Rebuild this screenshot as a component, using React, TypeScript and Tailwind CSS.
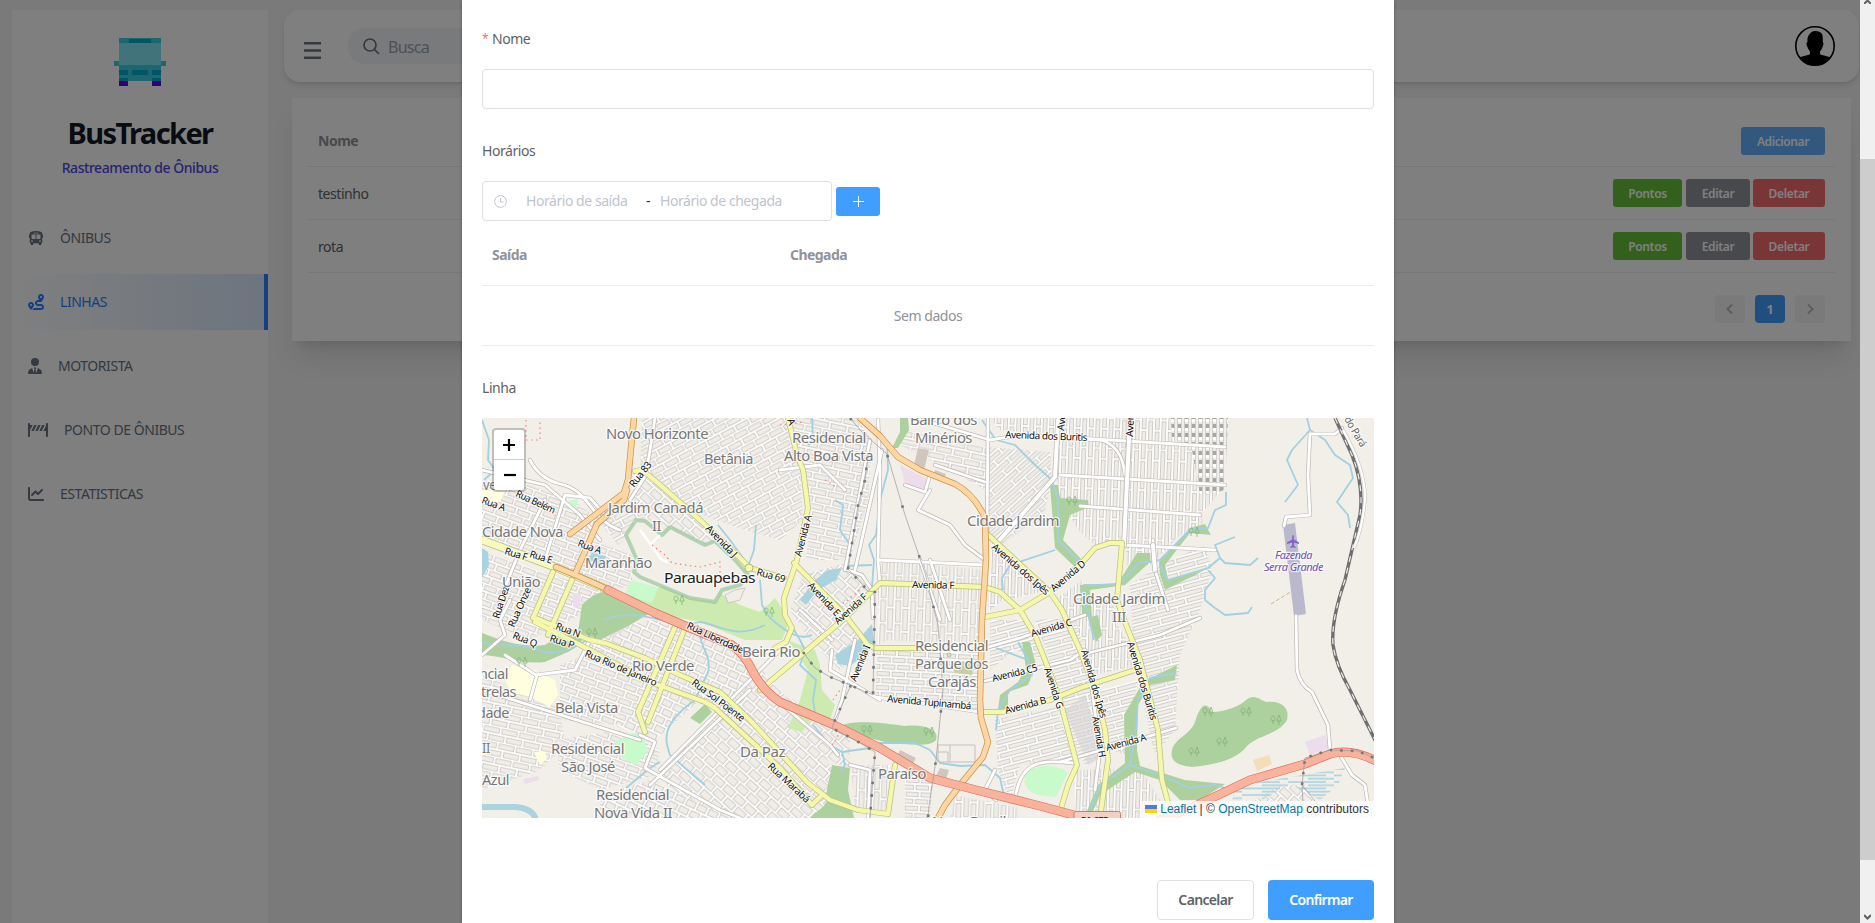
import React from "react";
import { FaBus, FaRoute, FaUserTie, FaRoadBarrier, FaChartLine } from "react-icons/fa6";

type P = { d: string };

/* ---------- Map data ---------- */

const blocks = [
  { id: "g0", w: 15, h: 7, a: 3 },
  { id: "g1", w: 16, h: 7.5, a: -28 },
  { id: "g2", w: 15, h: 7.5, a: 20 },
  { id: "g3", w: 24, h: 7.5, a: 92 },
  { id: "g4", w: 34, h: 6.5, a: -42 },
  { id: "g5", w: 30, h: 6.8, a: -15 },
  { id: "g6", w: 12, h: 9, a: 25 },
  { id: "g7", w: 14, h: 9.5, a: 42 },
  { id: "g8", w: 30, h: 6.6, a: 92 },
  { id: "g9", w: 18, h: 7.5, a: 12 },
];

const districts: [string, string][] = [
  ["g1", "642,418 786,418 800,470 803,520 780,540 745,530 700,515 640,470"],
  ["g7", "640,476 660,486 735,556 690,540 665,530 640,515 628,500"],
  ["g9", "792,418 856,418 872,440 868,500 850,560 806,560 812,505 798,465"],
  ["g1", "598,520 625,505 640,505 650,530 630,535 618,545"],
  ["g2", "482,482 530,485 580,505 598,520 590,548 578,572 482,540"],
  ["g2", "482,552 605,592 590,610 530,640 482,620"],
  ["g2", "590,540 632,555 632,585 615,590 580,575"],
  ["g6", "598,630 655,620 735,650 755,680 740,712 700,700 655,740 600,720 572,670"],
  ["g2", "560,665 600,650 655,685 640,715 620,725 560,720"],
  ["g9", "482,675 560,708 565,745 540,770 482,790"],
  ["g2", "555,740 620,730 660,750 655,775 600,790 560,770"],
  ["g7", "655,775 760,668 815,730 840,790 850,818 710,818"],
  ["g6", "600,795 650,780 730,818 600,818"],
  ["g7", "765,690 790,698 850,740 850,770 830,760 800,730 775,712"],
  ["g7", "803,575 848,562 872,590 845,618 870,640 840,670 810,640 790,610"],
  ["g3", "880,590 983,592 983,612 925,620 878,645"],
  ["g3", "878,560 985,570 985,645 878,640"],
  ["g0", "876,650 983,650 982,715 876,695"],
  ["g9", "900,430 988,448 986,490 950,470 900,445"],
  ["g4", "988,447 1050,452 1052,480 1045,510 1000,548 988,530"],
  ["g8", "990,418 1225,418 1222,490 1200,515 1125,525 1055,480 1058,435 1000,430"],
  ["g8", "1058,480 1125,480 1122,540 1098,548 1080,532 1072,520 1058,500"],
  ["g8", "1126,515 1202,515 1203,528 1180,535 1150,565 1126,565"],
  ["g5", "1130,585 1160,565 1205,545 1212,570 1200,610 1180,655 1175,730 1155,755 1135,665"],
  ["g8", "992,540 1048,590 1000,602 988,612"],
  ["g5", "990,620 1030,620 1045,660 1015,650 990,670"],
  ["g8", "1055,600 1082,580 1090,600 1112,600 1118,625 1140,665 1095,675 1080,635"],
  ["g5", "1035,620 1075,618 1098,700 1060,705 1048,655"],
  ["g5", "995,720 1055,706 1075,760 1020,765 1010,800 998,770"],
  ["g5", "1055,705 1090,695 1105,755 1085,765"],
  ["g5", "1100,690 1138,680 1130,715 1125,755 1108,748"],
  ["g5", "1155,680 1175,680 1170,730 1160,735"],
  ["g8", "1075,770 1140,768 1160,800 1150,818 1075,818"],
  ["g3", "850,765 890,765 885,812 855,808"],
  ["g0", "905,765 933,780 930,818 905,818"],
  ["g3", "955,795 1020,808 1020,818 950,818"],
  ["g7", "1255,800 1280,785 1305,785 1325,818 1250,818"],
];

const waterAreas = [
  "M800,600 L815,580 L828,570 L842,568 L836,580 L818,590 L806,605 Z",
  "M835,655 L858,640 L872,624 L874,642 L864,655 L850,666 L838,664 Z",
  "M588,560 L592,552 L606,556 L602,566 Z",
  "M482,548 L488,552 L489,565 L482,578 Z",
];

const woods = [
  "M842,726 C848,720 880,722 905,726 C925,724 940,730 936,740 C930,748 905,744 885,742 C870,738 850,735 842,726 Z",
  "M1172,750 C1175,738 1190,735 1195,722 C1200,705 1206,700 1212,712 C1225,712 1240,706 1246,700 C1253,694 1258,698 1266,702 C1282,700 1290,708 1287,720 C1278,735 1258,735 1247,746 C1235,762 1210,765 1192,767 C1175,765 1170,760 1172,750 Z",
  "M482,633 C500,640 520,648 545,645 C560,635 570,630 582,640 C578,650 560,655 545,662 C520,665 500,655 482,655 Z",
  "M582,605 C600,585 620,590 640,600 L655,610 L630,625 L600,640 L578,632 Z",
  "M832,765 L850,768 L848,790 L854,818 L810,818 C820,808 830,805 826,795 Z",
  "M1050,485 L1058,485 L1060,498 L1088,500 L1089,507 L1070,515 L1063,540 L1082,560 L1076,568 L1055,548 Z",
  "M900,418 L908,418 L909,430 L898,448 L892,448 L900,432 Z",
  "M1159,562 L1190,528 L1205,524 L1211,535 L1190,533 L1165,565 L1168,580 L1205,570 L1165,590 L1160,575 Z",
  "M1137,553 L1150,553 L1150,562 L1125,585 L1090,590 L1092,618 L1082,615 L1080,585 L1118,583 Z",
  "M1022,642 L1030,642 L1036,665 L1028,685 L1008,692 L1008,712 L998,710 L1000,695 L1018,682 L1026,668 Z",
  "M1177,665 L1175,680 L1150,685 L1138,705 L1137,750 L1140,766 L1185,780 L1225,784 L1200,800 L1180,800 L1160,780 L1135,772 L1100,795 L1090,818 L1084,818 L1098,785 L1125,763 L1124,715 L1143,682 Z",
  "M690,718 L705,704 L712,712 L700,724 Z",
  "M1088,618 L1098,615 L1102,635 L1096,642 Z",
];

const parks = [
  ["#cdebb0", "M658,588 L690,575 L740,605 L760,612 L775,598 L790,620 L782,640 L745,640 L700,622 L660,614 L630,600 Z"],
  ["#cdebb0", "M788,640 L800,645 L815,650 L820,665 L822,690 L835,705 L830,720 L812,718 L802,732 L788,728 L800,700 L808,670 Z"],
  ["#c8facc", "M624,595 L632,580 L658,588 L652,603 Z"],
  ["#c8facc", "M615,743 Q630,730 642,734 L648,752 L635,765 L618,755 Z"],
  ["#c8facc", "M1025,775 C1035,762 1060,765 1068,773 L1056,797 L1038,795 Q1022,790 1025,775 Z"],
  ["#c8facc", "M568,502 L578,498 L576,510 L568,510 Z"],
  ["#ffffe0", "M505,678 L512,665 L530,668 L555,680 L558,695 L550,707 L530,697 L510,692 Z"],
  ["#ffffe0", "M534,752 L545,752 L547,758 L540,765 Z"],
  ["#ffffe0", "M482,490 L505,492 L500,502 L482,502 Z"],
  ["#ecdcec", "M900,465 L930,480 L924,493 L906,487 Z"],
  ["#ecdcec", "M1305,742 L1325,735 L1330,748 L1310,755 Z"],
  ["#ecdcec", "M602,625 L622,618 L626,628 L612,638 Z"],
  ["#ecdcec", "M573,593 L581,593 L580,608 L573,607 Z"],
  ["#ecdcec", "M523,779 L538,776 L539,780 L525,784 Z"],
  ["#d1c6bd", "M918,448 L929,450 L924,470 L914,465 Z"],
  ["#d1c6bd", "M935,470 L946,474 L943,480 L934,477 Z"],
  ["#d1c6bd", "M900,750 L916,758 L911,767 L895,760 Z"],
  ["#d1c6bd", "M940,768 L949,770 L946,779 L936,776 Z"],
  ["#f5dcba", "M1253,760 L1269,755 L1272,764 L1257,771 Z"],
  ["#bab9cc", "M1283,525 L1295,523 L1306,614 L1294,616 Z"],
  ["#c9cf9f", "M953,662 L973,662 L972,675 L955,673 Z"],
];

const rivers = [
  "M482,420 L489,440 L488,460 L495,470 L484,480",
  "M812,418 L813,440 L808,445",
  "M887,440 L888,470 L880,500 L876,535 L869,545 L874,560 L871,600",
  "M835,500 L843,505 L840,530 L850,545",
  "M844,566 L872,565",
  "M748,565 L730,540 L718,525 M756,525 L754,550 L745,575",
  "M760,580 L762,605 L770,618 C790,635 800,640 812,635",
  "M785,615 L800,640 L805,650 L800,665 L816,680 L813,700 L815,712",
  "M813,725 L830,745 L842,752 L845,765 L840,772 M842,752 L870,748 L880,743 L915,743 L930,750 L940,763 L960,766 L985,765 L1000,778 L1005,800",
  "M603,620 C640,605 670,630 700,622 C720,625 735,640 765,625",
  "M482,642 C500,650 520,640 545,652 C560,655 580,645 590,638",
  "M698,625 C700,650 712,655 708,672 L695,700 C660,725 665,740 670,755 L705,785",
  "M626,788 L650,768 L660,762",
  "M982,420 L996,440 L1015,445 L1035,465 L1052,480 L1058,500 L1058,540 L1080,562",
  "M1055,550 L1010,565 L1002,578 L1003,590",
  "M1083,585 L1118,585 L1140,562 L1150,562 L1160,560 L1190,530 L1208,528 L1215,510 L1226,505 L1226,492",
  "M1160,565 L1168,580 L1208,568 L1220,558 L1215,545 L1235,537 M1220,558 L1225,563 L1250,565 L1258,558",
  "M1208,570 L1215,578 L1205,590 L1205,600 L1215,608 L1225,615 L1248,613 L1252,607",
  "M1307,418 L1310,430 L1292,450 L1287,460 L1298,485 L1285,502",
  "M1310,430 L1325,440 L1335,455 L1350,465 L1353,478 L1337,502 L1348,515 L1350,528",
  "M1083,590 L1094,640 M996,648 L1028,660 L1018,642 M1028,660 L1032,675 L1010,690 L998,710 L996,730",
  "M1175,673 L1150,678 L1138,700 L1136,730 L1130,765 L1160,775 L1190,788 L1215,785 L1225,788 M1130,765 L1100,785 L1090,810",
];

const minorRoads = [
  "M655,418 L650,450 L646,475 L630,500",
  "M482,470 L545,485 L580,515 L600,540",
  "M545,560 L565,495 L590,498 L605,515",
  "M530,460 C535,470 545,480 560,484 C590,490 590,520 620,530",
  "M500,600 L520,550 L545,500",
  "M482,655 L505,635 L500,620 L510,600",
  "M505,655 L536,675 L575,670 L590,640",
  "M530,700 L537,675",
  "M482,690 L640,740",
  "M640,735 L655,742 L645,768 L720,810 L740,818",
  "M660,770 L730,700 L780,650",
  "M650,785 L750,690",
  "M905,485 L925,492 L930,475 M918,510 L930,490 M918,510 L950,525 L965,545 L985,560",
  "M935,465 L985,482",
  "M878,420 L880,470 L878,560 L880,585",
  "M878,560 L985,565",
  "M920,560 L940,620 M930,560 L950,620",
  "M848,570 L862,575 L872,590 L873,618",
  "M870,440 L845,570 M882,450 L855,570",
  "M780,470 L820,465 L845,490",
  "M875,697 L920,703 L980,712",
  "M985,648 L1020,638 L1085,615",
  "M985,681 L1070,660 L1085,650",
  "M988,418 L987,540",
  "M915,418 L940,425 L990,440 L1020,435 L1100,440",
  "M1100,440 Q1122,445 1125,475",
  "M1060,437 L1225,447",
  "M1060,475 L1225,485",
  "M1080,506 L1200,515",
  "M1125,545 L1215,550",
  "M1153,540 L1155,570 L1168,610",
  "M1080,655 L1160,635 L1200,618",
  "M1060,762 L1130,742 L1176,728",
  "M1090,675 L1100,750 L1095,790",
  "M1310,434 L1335,434 L1342,428",
  "M1310,434 L1308,475 L1310,515 L1286,517 L1284,526",
  "M1296,616 L1297,670 Q1300,685 1312,692 L1328,725 L1330,750",
  "M1340,755 L1352,775 L1365,785 L1370,818",
  "M996,800 L985,790 L995,770",
  "M1015,800 C1020,760 1040,760 1075,763",
  "M850,765 L870,770 L868,818",
  "M765,690 L830,745 L838,755",
  "M832,650 L830,670 L880,700",
  "M832,640 L800,610",
  "M855,640 L842,700 L835,720",
];

const yellowRoads = [
  "M635,471 L642,470 L658,483 L700,520 L738,556 L750,568 L784,578",
  "M788,418 L797,455 L803,470 L808,508 L797,560 L784,598 L785,615 L792,628 L786,642 L775,648",
  "M794,563 L845,615 L868,645 L875,648 L940,648",
  "M760,690 L780,673 L845,618 L880,583 L985,587 L1000,592 L1020,610 L1035,635 L1045,660 L1060,700 L1077,765 L1068,785 L1060,812",
  "M986,533 L1050,592 L1062,610 L1080,650 L1095,690 L1105,730 L1108,760 L1100,818",
  "M985,617 L1020,610 L1050,592 L1080,565 L1095,548 L1110,543 L1122,543 L1117,600 L1125,622 L1140,660 L1158,730 L1162,780 L1170,810",
  "M980,712 L1003,712 L1050,700 L1080,688 L1135,670",
  "M535,618 L590,640 L605,643 L645,658 L680,675 L720,692 L750,720 L784,757 L808,783 L830,800 L858,810 L888,814 L895,765",
  "M535,622 L590,650 L650,682 L705,702 L715,708 L750,740 L780,768 L812,805 L822,795",
  "M676,625 L638,712 L645,732 M685,628 L648,722",
  "M553,572 L533,618 M572,580 L548,635",
];

const primaryRoads = [
  "M634,418 L631,448 L628,480 L624,493 L570,534",
  "M627,490 L624,500 L597,524 L590,540 L576,572",
  "M556,567 L580,577 L609,590",
  "M860,418 L880,436 L898,457 L920,470 L955,484 Q975,495 985,518 L986,560 L982,620 L980,700 L981,718 L988,742 L983,757 L960,785 L945,805 L938,818",
];

const trunkRoads = [
  "M608,590 L655,613 L690,628 L732,645 Q745,655 752,670 Q762,690 780,702 L832,724 L880,748 L930,778 L980,791 L1040,806 L1085,818",
  "M1160,820 L1195,806 L1250,780 L1305,764 L1330,754 Q1350,748 1376,761",
];

const powerLines = [
  "M850,418 L862,432 L887,454 L905,515 L925,573 L938,625 L943,690 L938,740 L936,760 L929,806 L928,818",
  "M868,455 L865,480 L858,505 L848,569 L861,583 L868,591 L875,592 L873,695",
  "M803,652 L815,668 L830,677 L850,685 L873,695",
  "M851,685 L835,720 L832,728 L855,740 L875,752 L870,818",
];

type Label = [string, number, number, number, number?];
/* text, start x, baseline y, length, rotation */
const places: Label[] = [
  ["Novo Horizonte", 606, 439, 102], ["Betânia", 704, 464, 49], ["Jardim Canadá", 608, 513, 95],
  ["II", 652, 531, 9], ["Cidade Nova", 482, 537, 81], ["Maranhão", 585, 568, 67], ["União", 502, 587, 38],
  ["ve", 483, 490, 13], ["Residencial", 792, 443, 74], ["Alto Boa Vista", 784, 461, 89],
  ["Bairro dos", 910, 425, 67], ["Minérios", 915, 443, 57], ["Cidade Jardim", 967, 526, 92],
  ["Cidade Jardim", 1073, 604, 92], ["III", 1112, 622, 14], ["Rio Verde", 632, 671, 62],
  ["Bela Vista", 555, 713, 63], ["Residencial", 551, 754, 73], ["São José", 561, 772, 54],
  ["Residencial", 596, 800, 73], ["Nova Vida II", 594, 818, 78], ["Azul", 482, 785, 27],
  ["II", 482, 753, 8], ["dade", 477, 718, 32], ["ncial", 479, 679, 29], ["trelas", 481, 697, 35],
  ["Da Paz", 740, 757, 45], ["Beira Rio", 742, 657, 58], ["Residencial", 915, 651, 73],
  ["Parque dos", 915, 669, 73], ["Carajás", 928, 687, 48], ["Paraíso", 878, 779, 48],
  ["Novo Brasil", 932, 827, 74],
];

const streets: Label[] = [
  ["Rua 83", 634, 488, 29, -52], ["Rua A", 481, 503, 24, 20], ["Rua Belém", 515, 496, 42, 25],
  ["Rua A", 577, 546, 24, 20], ["Rua E", 529, 557, 23, 17], ["Rua F", 504, 554, 23, 17],
  ["Rua Dez", 499, 619, 33, -72], ["Rua Onze", 514, 628, 42, -66], ["Avenida J", 705, 529, 40, 46],
  ["Rua 69", 756, 575, 29, 15], ["Avenida dos Buritis", 1005, 438, 82, 2], ["Avenida A", 801, 557, 42, -75],
  ["Avenida E", 807, 586, 42, 47], ["Avenida F", 838, 625, 40, -42], ["Avenida F", 912, 588, 42, 1],
  ["Avenida dos Ipês", 991, 548, 72, 41], ["Avenida D", 1054, 592, 42, -40], ["Avenida", 1133, 437, 36, -88],
  ["Avenida", 1064, 431, 36, -84], ["A", 787, 420, 6, 70],
  ["Avenida C", 1032, 637, 42, -16], ["Avenida C5", 993, 682, 46, -14], ["Avenida B", 1006, 714, 42, -15],
  ["Avenida G", 1044, 669, 42, 72], ["Avenida Tupinambá", 887, 702, 84, 5], ["Avenida I", 856, 682, 38, -68],
  ["Rua Liberdade", 686, 628, 61, 25], ["Rua N", 555, 629, 25, 20], ["Rua P", 549, 641, 25, 18],
  ["Rua Q", 512, 638, 25, 22], ["Rua Rio de Janeiro", 584, 656, 77, 23], ["Rua Sol Poente", 691, 684, 63, 37],
  ["Rua Marabá", 767, 767, 53, 43], ["Avenida dos Ipês", 1081, 651, 70, 74], ["Avenida H", 1092, 717, 41, 80],
  ["Avenida dos Buritis", 1127, 643, 81, 73], ["Avenida A", 1107, 751, 41, -15],
];

const trees = [[1208, 712], [1246, 712], [1276, 720], [1222, 742], [1194, 752], [679, 600], [769, 612], [867, 730], [929, 732], [592, 633], [522, 662], [1072, 501], [1194, 532]];

function Roads({ list, w, fill, casing }: { list: string[]; w: number; fill: string; casing: string }) {
  return (
    <g fill="none" strokeLinejoin="round" strokeLinecap="round">
      {list.map((d, i) => <path key={"c" + i} d={d} stroke={casing} strokeWidth={w + 1.4} />)}
      {list.map((d, i) => <path key={"f" + i} d={d} stroke={fill} strokeWidth={w} />)}
    </g>
  );
}

function MapText({ items, size, fill }: { items: Label[]; size: number; fill: string }) {
  return (
    <g fontSize={size} fill={fill} stroke="#fff" strokeOpacity="0.75" strokeWidth="2.4" strokeLinejoin="round" style={{ paintOrder: "stroke" }}>
      {items.map(([t, x, y, len, rot = 0], i) => (
        <text key={i} x={x} y={y} textLength={len} lengthAdjust="spacingAndGlyphs" transform={`rotate(${rot} ${x} ${y})`}>{t}</text>
      ))}
    </g>
  );
}

function CityMap() {
  return (
    <svg viewBox="482 418 892 400" className="block h-[400px] w-full font-['Noto_Sans',sans-serif]">
      <defs>
        {blocks.map((b) => (
          <pattern key={b.id} id={b.id} width={b.w} height={b.h * 2} patternUnits="userSpaceOnUse" patternTransform={`rotate(${b.a})`}>
            <rect width={b.w} height={b.h * 2} fill="#fff" />
            <g fill="#f0ece6" stroke="#c6c2be" strokeWidth="0.8">
              <rect x="1.3" y="1.3" width={b.w - 2.6} height={b.h - 2.6} />
              <rect x={1.3 - b.w * 0.35} y={b.h + 1.3} width={b.w - 2.6} height={b.h - 2.6} />
              <rect x={1.3 + b.w * 0.65} y={b.h + 1.3} width={b.w - 2.6} height={b.h - 2.6} />
            </g>
          </pattern>
        ))}
        <pattern id="marsh" width="46" height="6.5" patternUnits="userSpaceOnUse">
          <path d="M0,2 H38 M20,5.2 H46" stroke="#aad3df" strokeWidth="1.8" />
        </pattern>
        <pattern id="track" width="7" height="9" patternUnits="userSpaceOnUse">
          <rect width="7" height="9" fill="#f2efe9" />
          <rect x="1.5" width="4" height="9" fill="#fff" stroke="#bbb" strokeWidth="0.6" />
          <rect x="1.8" y="1" width="3.4" height="4" fill="#a8a5a2" />
        </pattern>
      </defs>
      <rect x="482" y="418" width="892" height="400" fill="#f2efe9" />
      {districts.map(([id, pts], i) => <polygon key={i} points={pts} fill={`url(#${id})`} />)}
      <polygon points="1171,418 1228,418 1225,490 1200,495 1192,450 1172,438" fill="url(#track)" />
      <polygon points="1065,710 1085,695 1106,755 1088,765" fill="#d5d5d5" opacity="0.6" />
      <polygon points="1235,790 1260,782 1345,768 1338,785 1320,800 1290,784 1262,800 1232,800" fill="url(#marsh)" />
      {parks.map(([c, d], i) => <path key={i} d={d} fill={c} />)}
      {woods.map((d, i) => <path key={i} d={d} fill="#add19e" />)}
      <path d="M626,535 L636,520 L645,521 L662,535 L670,527 L705,545 L715,541 L735,560 L748,575 L740,585 L722,590 L715,602 L690,598 L640,577 L634,572 L637,560 Z" fill="#f2efe9" stroke="#9ac59a" strokeWidth="4" strokeOpacity="0.7" strokeLinejoin="round" />
      <path d="M640,530 L662,560 L668,562 M650,545 L660,535" fill="none" stroke="#fff" strokeWidth="2.4" />
      <path d="M725,595 L735,590 L745,588 L740,600 L728,603 Z" fill="#f0ece6" stroke="#c3bfbb" strokeWidth="0.8" />
      <path d="M526,420 V440 H540 V420 M652,545 L665,555 L672,563 L700,567 L720,562 L720,575 M870,505 L866,520 M780,425 L804,422 M825,480 L835,486 M835,610 L860,590 M833,700 L840,690 M832,745 L845,725" fill="none" stroke="#f08080" strokeWidth="1.2" strokeDasharray="1.5 3.5" />
      {waterAreas.map((d, i) => <path key={i} d={d} fill="#aad3df" />)}
      <path d="M482,807 H515 Q533,808 536,820" fill="none" stroke="#aad3df" strokeWidth="6" />
      <g fill="none" stroke="#a3d0e0" strokeWidth="1.8" strokeLinejoin="round">
        {rivers.map((d, i) => <path key={i} d={d} />)}
      </g>
      <path d="M938,745 H975 V762 H938 Z M938,752 H948 V762 M950,745 V762" fill="none" stroke="#c4c1bd" strokeWidth="1" />
      <Roads list={minorRoads} w={2.8} fill="#ffffff" casing="#bdb9b5" />
      <Roads list={["M1130,418 L1124,545", "M1058,420 L1055,477 L997,543", "M1153,545 L1155,570"]} w={4} fill="#ffffff" casing="#bdb9b5" />
      <Roads list={["M482,540 L555,567 L609,590"]} w={7} fill="#f7fabf" casing="#b7b96b" />
      <Roads list={yellowRoads} w={4.4} fill="#f4f7ac" casing="#bcbf78" />
      <Roads list={primaryRoads} w={5} fill="#fcd6a4" casing="#c9913f" />
      <Roads list={trunkRoads} w={7.6} fill="#f9b29c" casing="#d9705c" />
      <circle cx="749" cy="568" r="4" fill="#f4f7ac" stroke="#b7b96b" />
      <circle cx="949" cy="655" r="2" fill="#cdebb0" stroke="#999" strokeWidth="0.6" />
      <g fill="none" stroke="#999" strokeWidth="0.7">
        {powerLines.map((d, i) => <path key={i} d={d} />)}
        <path d="M1304,818 L1302,785 L1305,758 L1330,750 L1358,751 L1374,758 M1302,785 L1318,805" />
      </g>
      <g fill="none" stroke="#787878" strokeWidth="2.6">
        {powerLines.slice(1).map((d, i) => <path key={i} d={d} strokeDasharray="2.6 10" />)}
        <path d={powerLines[0]} strokeDasharray="2.6 50" />
        <path d="M1302,785 L1305,758 L1330,750 L1358,751 L1374,758" strokeDasharray="2.6 8" />
      </g>
      <path d="M1335,418 L1352,455 Q1364,485 1360,515 L1345,580 Q1331,620 1333,645 Q1336,665 1350,690 L1376,742" fill="none" stroke="#706f6f" strokeWidth="3.4" />
      <path d="M1335,418 L1352,455 Q1364,485 1360,515 L1345,580 Q1331,620 1333,645 Q1336,665 1350,690 L1376,742" fill="none" stroke="#eee" strokeWidth="1.2" strokeDasharray="6 6" />
      <path d="M1343,430 Q1366,470 1365,500 Q1362,530 1354,548" fill="none" stroke="#c8c4c0" strokeWidth="3.4" />
      <path d="M1343,430 Q1366,470 1365,500 Q1362,530 1354,548" fill="none" stroke="#fff" strokeWidth="2.2" />
      <path d="M1271,604 L1292,591" stroke="#c9a26a" strokeDasharray="4 2" strokeWidth="0.8" />
      <g fill="none" stroke="#7fae76" strokeWidth="0.9" opacity="0.8">
        {trees.map(([x, y], i) => (
          <path key={i} d={`M${x - 3},${y - 4}a2,2.6 0 1 0 .1,0M${x - 3},${y}v4M${x + 3},${y - 5}l-2.2,6h4.4zM${x + 3},${y + 1}v4`} />
        ))}
      </g>
      <path transform="translate(1287 535)" fill="#8461c4" d="M5.3,0.5 Q6.2,-0.5 6.8,0.8 V4.4 L12,7.4 V9 L6.9,7.4 V10.6 L8.6,12 V13 L6,12.2 L3.4,13 V12 L5.1,10.6 V7.4 L0,9 V7.4 L5.2,4.4 Z" />
      <MapText items={streets} size={10} fill="#111111" />
      <MapText items={places} size={14.4} fill="#777777" />
      <MapText items={[["Parauapebas", 664, 583, 91]]} size={15} fill="#222222" />
      <MapText items={[["do Pará", 1344, 419, 33, 60]]} size={10.5} fill="#666666" />
      <g className="italic"><MapText items={[["Fazenda", 1275, 559, 37], ["Serra Grande", 1264, 571, 59]]} size={10.5} fill="#6b4fb5" /></g>
      <rect x="1074" y="811.5" width="46.500" height="14" rx="2" fill="#f5cfc4" stroke="#c9806f" />
      <text x="1081" y="822.5" fontSize="9" fontWeight="700" fill="#5d2017">PA-275</text>
    </svg>
  );
}

/* ---------- Page pieces ---------- */

function BusLogo() {
  return (
    <svg className="block h-12 w-[52px]" viewBox="0 0 52 48" shapeRendering="crispEdges">
      <path fill="#3ecfe0" d="M5 0h42v43H5zM0 23h5v5H0zM47 23h5v5h-5z" />
      <path fill="#82e9f5" d="M5 5h42v22H5z" />
      <path fill="#00acc9" d="M15 1h22v4H15zM5 32h9v5H5zM18 32h16v5H18zM38 32h9v5h-9zM5 40h9v3H5zM38 40h9v3h-9z" />
      <path fill="#6200ea" d="M5 43h9v5H5zM38 43h9v5h-9z" />
    </svg>
  );
}

function Avatar() {
  return (
    <svg className="block size-10" viewBox="0 0 40 40">
      <circle cx="20" cy="20" r="19.2" fill="none" stroke="#000" strokeWidth="1.6" />
      <path d="M15.5,7 Q17,5 20,5 Q26,5.200 27.500,9 Q28,13 27.800,16 Q29.200,17 28,20 Q26.500,24 25,25.500 Q24.600,28 26,28.800 Q31,30 36,31.500 Q30,39.500 20,39.500 Q10,39.500 4,31.500 Q9,30 14,28.800 Q15.400,28 15,25.500 Q13.500,24 12,20 Q10.800,17 12.400,16 Q12,10 15.500,7 Z" />
    </svg>
  );
}

const menu = [
  { label: "ÔNIBUS", icon: <FaBus className="size-4" /> },
  { label: "LINHAS", icon: <FaRoute className="size-4" />, active: true },
  { label: "MOTORISTA", icon: <FaUserTie className="h-4 w-3.5" /> },
  { label: "PONTO DE ÔNIBUS", icon: <FaRoadBarrier className="h-4 w-5" /> },
  { label: "ESTATISTICAS", icon: <FaChartLine className="size-4" /> },
];

function Sidebar() {
  return (
    <aside className="mt-2.5 ml-3 flex w-64 shrink-0 flex-col bg-white">
      <div className="flex flex-col items-center pt-7">
        <BusLogo />
        <h1 className="mt-[27px] text-[29px] leading-10 font-bold tracking-[-1.6px] text-[#111827]">BusTracker</h1>
        <p className="mt-[5px] text-sm leading-5 font-medium tracking-[-0.45px] text-[#4f46e5]">Rastreamento de Ônibus</p>
      </div>
      <nav className="mt-8 flex flex-col gap-2">
        {menu.map((m) => (
          <a key={m.label} className={m.active
            ? "flex h-14 items-center gap-4 border-r-4 border-blue-500 bg-gradient-to-r from-white to-blue-100 pl-4 text-blue-500"
            : "flex h-14 items-center gap-4 pl-4 text-gray-500"}>
            {m.icon}
            <span className="text-sm font-normal tracking-[-0.45px]">{m.label}</span>
          </a>
        ))}
      </nav>
    </aside>
  );
}

function Actions() {
  return (
    <div className="flex text-xs font-semibold tracking-[-0.35px] text-white">
      <button className="mr-1 h-7 w-[69px] rounded-[3px] bg-[#67c23a] pt-px">Pontos</button>
      <button className="mr-[3px] h-7 w-16 rounded-[3px] bg-[#909399] pt-px">Editar</button>
      <button className="h-7 w-[72px] rounded-[3px] bg-[#f56c6c] pt-px">Deletar</button>
    </div>
  );
}

function Chevron({ d }: P) {
  return <svg className="size-3.5" viewBox="0 0 14 14" fill="none" stroke="#b4b8c0" strokeWidth="1.8"><path d={d} /></svg>;
}

function Background() {
  return (
    <div className="flex h-full w-[1860px] bg-[#f4f4f4]">
      <Sidebar />
      <main className="ml-4 flex w-[1575px] flex-col pt-2.5">
        <header className="flex h-[72px] items-center rounded-2xl bg-white shadow-md">
          <svg className="mt-[9px] ml-5 h-[17px] w-[17px]" viewBox="0 0 17 17" stroke="#6b7280" strokeWidth="2.400"><path d="M0 1.200h17M0 8.500h17M0 15.800h17" /></svg>
          <div className="ml-[27px] flex h-9 w-[400px] items-center rounded-2xl bg-gray-100 pl-[15px]">
            <svg className="size-[17px]" viewBox="0 0 17 17" fill="none" stroke="#6b7280" strokeWidth="1.7"><circle cx="7" cy="7" r="6" /><path d="M11.300 11.300l4.700 4.700" /></svg>
            <span className="ml-2 pt-px text-base tracking-[-0.75px] text-gray-400">Busca</span>
          </div>
          <div className="mr-6 ml-auto"><Avatar /></div>
        </header>
        <section className="mt-4 mr-2 ml-2 flex h-[243px] flex-col bg-white px-4 pt-4 text-sm shadow-xl">
          <div className="flex h-[53px] items-center justify-between border-b border-[#ebeef5] px-2.5 font-bold text-[#909399]">
            <span className="pt-0.5 tracking-[-0.5px]">Nome</span>
            <button className="mt-0.5 h-7 w-[84px] rounded-[3px] bg-[#66b1ff] pt-px text-xs font-semibold tracking-[-0.4px] text-white">Adicionar</button>
          </div>
          {["testinho", "rota"].map((n) => (
            <div key={n} className="flex h-[53px] items-center justify-between border-b border-[#ebeef5] px-2.5 text-[#606266]">
              <span className="pt-0.5 tracking-[-0.45px]">{n}</span>
              <Actions />
            </div>
          ))}
          <div className="mt-[22px] mr-2.5 flex justify-end gap-2.5 text-[13px] font-bold">
            <span className="flex h-7 w-[30px] items-center justify-center rounded-sm bg-[#f4f4f5]"><Chevron d="M9 2.500L4.500 7L9 11.500" /></span>
            <span className="flex h-7 w-[30px] items-center justify-center rounded-sm bg-[#409eff] text-white">1</span>
            <span className="flex h-7 w-[30px] items-center justify-center rounded-sm bg-[#f4f4f5]"><Chevron d="M5 2.500L9.500 7L5 11.500" /></span>
          </div>
        </section>
      </main>
    </div>
  );
}

function Modal() {
  return (
    <div className="absolute top-0 left-[462px] flex h-full w-[932px] flex-col bg-white px-5 text-sm tracking-[-0.45px] text-[#606266] shadow-[0_1px_3px_rgba(0,0,0,0.3)]">
      <label className="mt-[29px] flex h-5 items-center"><span className="mr-1 w-1.5 text-xs text-[#f56c6c]">*</span>Nome</label>
      <div className="mt-5 h-10 rounded border border-[#dcdfe6]" />
      <label className="mt-8 h-5 leading-5">Horários</label>
      <div className="mt-5 flex items-center gap-1">
        <div className="flex h-10 w-[350px] items-center rounded border border-[#dcdfe6] text-[#c0c4cc]">
          <svg className="ml-[11px] size-[13px]" viewBox="0 0 13 13" fill="none" stroke="#c0c4cc"><circle cx="6.500" cy="6.500" r="5.900" /><path d="M6.500 3v4h3" /></svg>
          <span className="ml-[19px] w-[120px]">Horário de saída</span>
          <span className="w-[14px] text-[#303133]">-</span>
          <span>Horário de chegada</span>
        </div>
        <button className="flex h-[29px] w-11 items-center justify-center rounded-[3px] bg-[#409eff]">
          <svg className="size-[11px]" viewBox="0 0 11 11" stroke="#fff"><path d="M5.500 0v11M0 5.500h11" /></svg>
        </button>
      </div>
      <div className="flex h-[65px] items-center border-b border-[#ebeef5] pt-1 pl-2.5 font-bold tracking-[-0.55px] text-[#909399]">
        <span className="w-[298px]">Saída</span><span>Chegada</span>
      </div>
      <div className="flex h-[60px] items-center justify-center border-b border-[#ebeef5] text-[#909399]">Sem dados</div>
      <label className="mt-8 h-5 leading-5">Linha</label>
      <div className="relative mt-5 h-[400px] w-full overflow-hidden">
        <CityMap />
        <div className="absolute top-2.5 left-2.5 flex w-[34px] flex-col rounded border-2 border-black/20 bg-white bg-clip-padding">
          <span className="flex h-[30px] items-center justify-center border-b border-[#ccc]"><svg className="size-3.5" viewBox="0 0 14 14" stroke="#000" strokeWidth="2.200"><path d="M7 1v12M1 7h12" /></svg></span>
          <span className="flex h-[30px] items-center justify-center pl-0.5"><svg className="size-3.5" viewBox="0 0 14 14" stroke="#000" strokeWidth="2.200"><path d="M1 7h12" /></svg></span>
        </div>
        <div className="absolute right-0 bottom-0 flex h-[17px] items-center bg-white/80 px-[5px] pb-0.5 font-['Liberation_Sans',sans-serif] text-xs tracking-normal whitespace-pre text-[#333]">
          <svg className="mr-[3px] h-2 w-3" viewBox="0 0 12 8"><path fill="#4C7BE1" d="M0 0h12v4H0z" /><path fill="#FFD500" d="M0 4h12v4H0z" /></svg>
          <span className="text-[#0078a8]">Leaflet</span>{" | © "}<span className="text-[#0078a8]">OpenStreetMap</span>{" contributors"}
        </div>
      </div>
      <div className="mt-[62px] flex justify-end gap-3.5 font-semibold tracking-[-0.65px]">
        <button className="h-10 w-[97px] rounded border border-[#dcdfe6] bg-white">Cancelar</button>
        <button className="h-10 w-[106px] rounded bg-[#409eff] text-white">Confirmar</button>
      </div>
    </div>
  );
}

function Scrollbar() {
  return (
    <div className="flex h-full w-[15px] shrink-0 flex-col bg-[#f0f0f0]">
      <div className="flex h-[159px] justify-center"><svg className="h-1 w-[7px]" viewBox="0 0 7 4" fill="none" stroke="#606060" strokeWidth="2"><path d="M0 4L3.500 .5L7 4" /></svg></div>
      <div className="h-[701px] bg-[#cdcdcd]" />
      <div className="flex flex-1 items-end justify-center pb-[3px]"><svg className="h-[6px] w-[7px]" viewBox="0 0 7 6" fill="none" stroke="#606060" strokeWidth="2"><path d="M0 1L3.500 4.500L7 1" /></svg></div>
    </div>
  );
}

export default function App() {
  return (
    <div className="flex h-[923px] w-[1875px] overflow-hidden font-['Noto_Sans',sans-serif]">
      <div className="relative h-full w-[1860px] shrink-0 overflow-hidden">
        <Background />
        <div className="absolute inset-0 bg-black/50" />
        <Modal />
      </div>
      <Scrollbar />
    </div>
  );
}
